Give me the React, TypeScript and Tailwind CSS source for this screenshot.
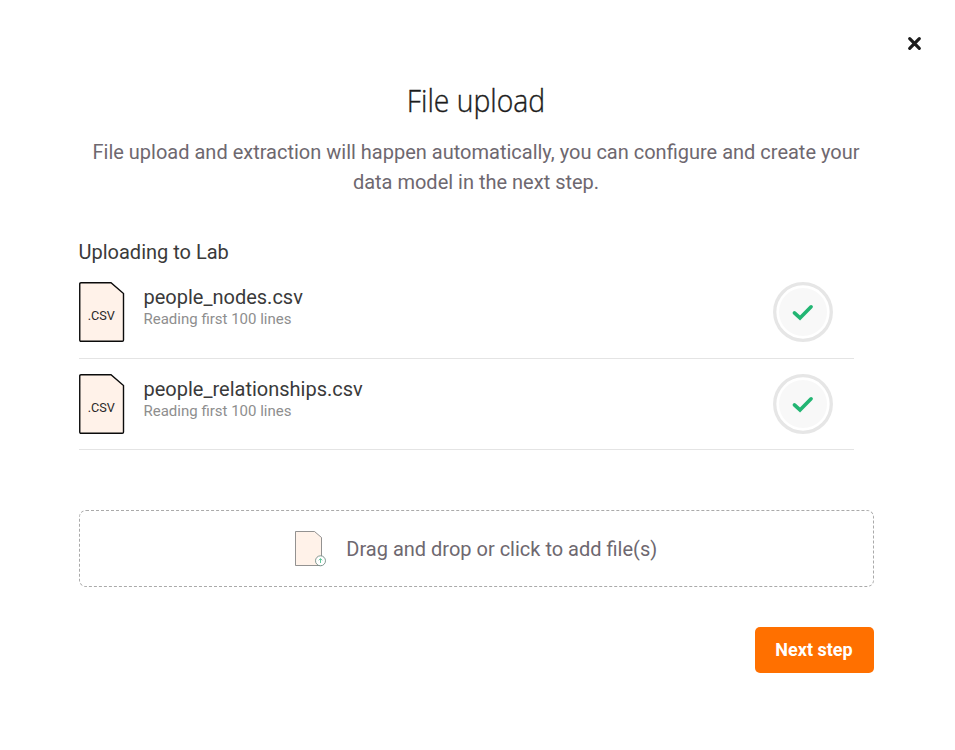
function CsvIcon() {
  return (
    <svg width="46" height="60" viewBox="0 0 46 60" className="shrink-0">
      <path
        d="M2 .75H32L44.5 11.5V58Q44.5 59.25 43.3 59.25H2Q.75 59.25 .75 58V2Q.75 .75 2 .75Z"
        fill="#fff2e9"
        stroke="#0b0b0b"
        strokeWidth="1.4"
      />
      <text
        x="8.7"
        y="38"
        textLength="27.2"
        lengthAdjust="spacingAndGlyphs"
        fontSize="13.4"
        fill="#2a2a2a"
        fontFamily="Roboto, sans-serif"
      >
        .CSV
      </text>
    </svg>
  );
}

function DoneBadge() {
  return (
    <svg width="60" height="60" viewBox="0 0 60 60" className="mr-[21px] shrink-0">
      <circle cx="30" cy="30" r="28.3" fill="#fff" stroke="#e6e6e6" strokeWidth="3.3" />
      <circle cx="30" cy="30" r="24" fill="#f8f8f8" />
      <path d="M21.4 30.9L27 35.9L38.1 24.8" fill="none" stroke="#22b573" strokeWidth="3.6" strokeLinecap="round" />
    </svg>
  );
}

function FileRow({ name, className }: { name: string; className: string }) {
  return (
    <li className={`flex w-[775px] items-start border-b border-[#e4e4e4] ${className}`}>
      <CsvIcon />
      <div className="ml-[18.5px] grow pt-1">
        <div className="text-[20px] leading-[22px] text-[#3a3a3a]">{name}</div>
        <div className="text-[15px] leading-[22px] text-[#8e8e8e]">Reading first 100 lines</div>
      </div>
      <DoneBadge />
    </li>
  );
}

export default function App() {
  return (
    <main className="flex h-[750px] w-[955px] flex-col bg-white pr-[81px] pl-[79px] font-['Roboto',sans-serif]">
      <button aria-label="Close" className="mt-9 -mr-12 self-end">
        <svg width="15" height="15" viewBox="0 0 15 15">
          <path d="M2.7 2.7L12.3 12.3M12.3 2.7L2.7 12.3" stroke="#1c1c1c" strokeWidth="3.2" strokeLinecap="round" />
        </svg>
      </button>
      <h1 className="mt-[29px] -ml-px scale-x-[0.885] text-center font-['Open_Sans',sans-serif] text-[32px] leading-10 font-light text-[#1c1c1c] [-webkit-text-stroke:0.4px_#1c1c1c]">
        File upload
      </h1>
      <p className="mt-[17px] -ml-px text-center text-[20px] leading-[30px] text-[#6e686f]">
        File upload and extraction will happen automatically, you can configure and create your
        <br />
        data model in the next step.
      </p>
      <h2 className="mt-10 -ml-[0.5px] text-[20px] leading-[30px] text-[#3a3a3a]">Uploading to Lab</h2>
      <ul>
        <FileRow name="people_nodes.csv" className="h-[92px] pt-[15px]" />
        <FileRow name="people_relationships.csv" className="h-[91px] pt-[15px]" />
      </ul>
      <div className="mt-[60px] flex h-[77px] shrink-0 items-center rounded-[7px] border border-dashed border-[#aaa] pl-[214px]">
        <svg width="34" height="38" viewBox="0 0 34 38" className="shrink-0">
          <path d="M1.5 1.5H20.5L27.5 7.5V35.5H1.5Z" fill="#fff2e9" stroke="#777" strokeWidth=".8" />
          <circle cx="26.5" cy="30.8" r="5" fill="#fff" stroke="#668078" strokeWidth=".8" />
          <path d="M26.5 33V28.8M24.8 30.3L26.5 28.6L28.2 30.3" fill="none" stroke="#22b573" strokeWidth=".7" />
        </svg>
        <span className="ml-[18.3px] text-[20px] leading-[30px] text-[#6e686f]">Drag and drop or click to add file(s)</span>
      </div>
      <button className="mt-10 h-[46px] w-[119px] shrink-0 self-end rounded-[5px] bg-[#ff7000] pr-px pb-px text-[18px] font-bold text-white">
        Next step
      </button>
    </main>
  );
}
